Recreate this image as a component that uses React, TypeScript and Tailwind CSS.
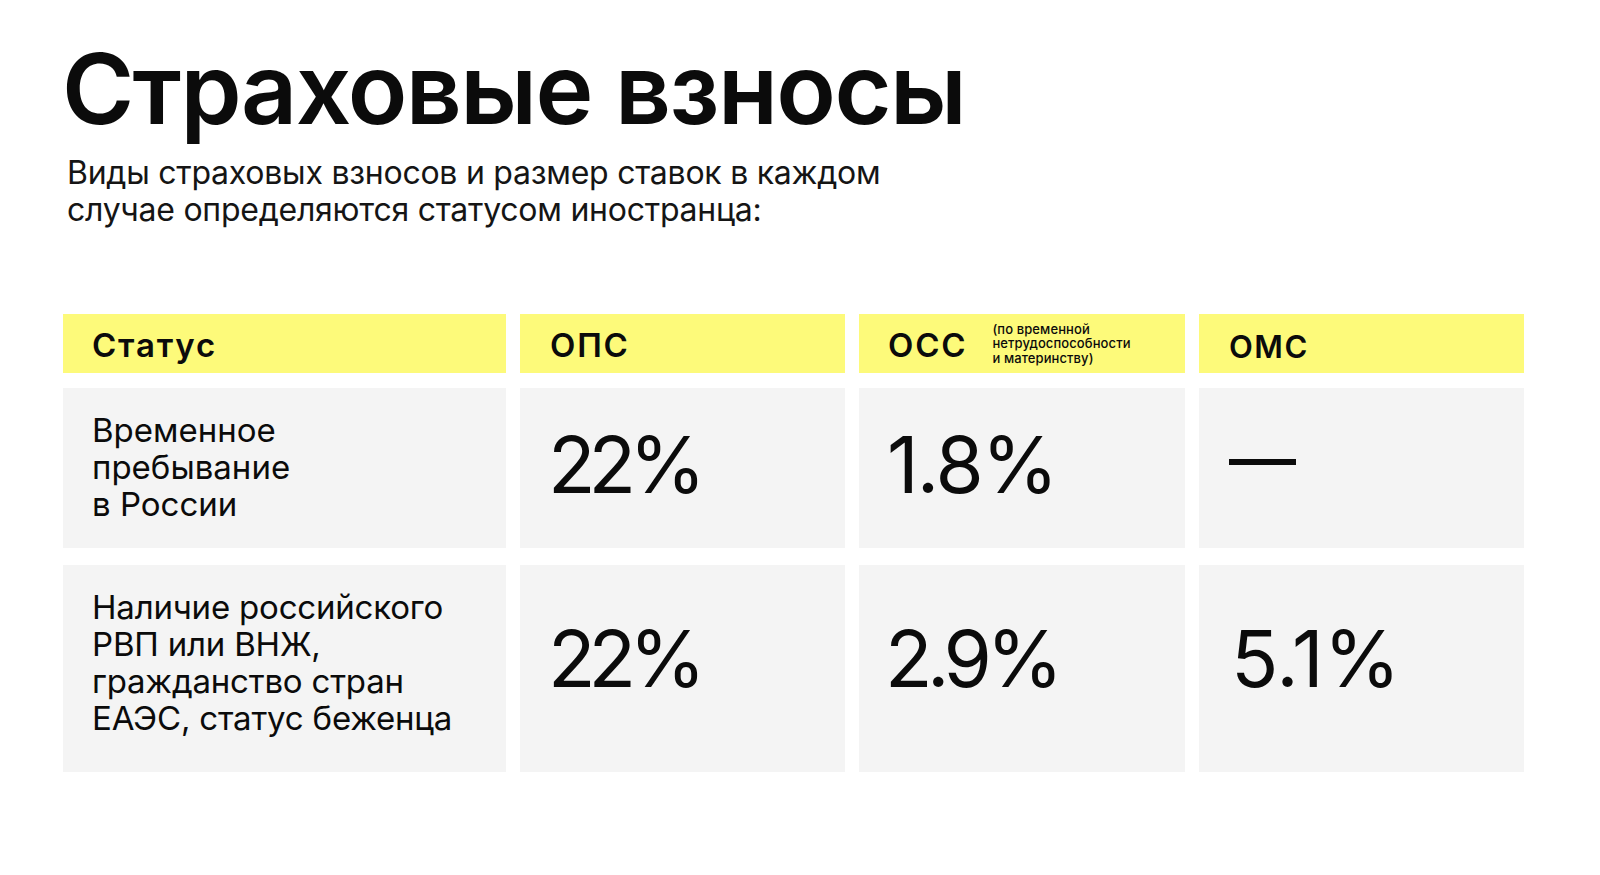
import React from "react";

const font = { fontFamily: "Inter, 'Noto Sans', sans-serif" };

export default function App() {
  return (
    <div className="w-[1600px] h-[875px] bg-white text-[#0b0b0b] overflow-hidden" style={font}>
      <div className="pl-[62px] pt-[34px]">
        <h1 className="text-[98px] leading-[110px] font-semibold tracking-[-1.6px]">Страховые взносы</h1>
        <p className="mt-[10px] pl-[5px] text-[32px] leading-[37px] font-normal tracking-[-0.25px] text-[#151515]">
          Виды страховых взносов и размер ставок в каждом
          <br />
          случае определяются статусом иностранца:
        </p>
      </div>

      <div className="ml-[63px] mt-[86px] w-[1461px] grid grid-cols-[443px_325px_326px_325px] gap-x-[14px]">
        {/* header */}
        <div className="h-[59px] bg-[#fdfa7a] flex items-center pl-[29px]">
          <span className="text-[33px] font-semibold tracking-[1.8px] mt-[5px]">Статус</span>
        </div>
        <div className="h-[59px] bg-[#fdfa7a] flex items-center pl-[30px]">
          <span className="text-[33px] font-semibold tracking-[1.8px] mt-[5px]">ОПС</span>
        </div>
        <div className="h-[59px] bg-[#fdfa7a] flex items-center pl-[29px] gap-[25px]">
          <span className="text-[33px] font-semibold tracking-[1.8px] mt-[5px]">ОСС</span>
          <span className="text-[13px] leading-[14.5px] font-medium tracking-[0.1px]">
            (по временной
            <br />
            нетрудоспособности
            <br />
            и материнству)
          </span>
        </div>
        <div className="h-[59px] bg-[#fdfa7a] flex items-center pl-[30px]">
          <span className="text-[31px] font-semibold tracking-[1.5px] mt-[7px]">ОМС</span>
        </div>

        {/* row 1 */}
        <div className="mt-[15px] h-[160px] bg-[#f4f4f4] pl-[29px] pt-[24px]">
          <p className="text-[33px] leading-[37px] tracking-[0px]">
            Временное
            <br />
            пребывание
            <br />в России
          </p>
        </div>
        <div className="mt-[15px] h-[160px] bg-[#f4f4f4] pl-[28px] flex items-center pb-[6px]">
          <span className="text-[78px] leading-none font-normal tracking-[-7px]">22%</span>
        </div>
        <div className="mt-[15px] h-[160px] bg-[#f4f4f4] pl-[28px] flex items-center pb-[6px]">
          <span className="text-[78px] leading-none font-normal tracking-[-2px]">1.8%</span>
        </div>
        <div className="mt-[15px] h-[160px] bg-[#f4f4f4] pl-[30px] pt-[71px]">
          <div className="w-[67px] h-[6px] bg-[#0b0b0b]" aria-label="—" />
        </div>

        {/* row 2 */}
        <div className="mt-[17px] h-[207px] bg-[#f4f4f4] pl-[29px] pt-[24px]">
          <p className="text-[33px] leading-[37px] tracking-[-0.2px]">
            Наличие российского
            <br />
            РВП или ВНЖ,
            <br />
            гражданство стран
            <br />
            ЕАЭС, статус беженца
          </p>
        </div>
        <div className="mt-[17px] h-[207px] bg-[#f4f4f4] pl-[28px] flex items-center pb-[20px]">
          <span className="text-[78px] leading-none font-normal tracking-[-7px]">22%</span>
        </div>
        <div className="mt-[17px] h-[207px] bg-[#f4f4f4] pl-[26px] flex items-center pb-[20px]">
          <span className="text-[78px] leading-none font-normal tracking-[-5.5px]">2.9%</span>
        </div>
        <div className="mt-[17px] h-[207px] bg-[#f4f4f4] pl-[32px] flex items-center pb-[20px]">
          <span className="text-[78px] leading-none font-normal tracking-[0px]">5.1%</span>
        </div>
      </div>
    </div>
  );
}
